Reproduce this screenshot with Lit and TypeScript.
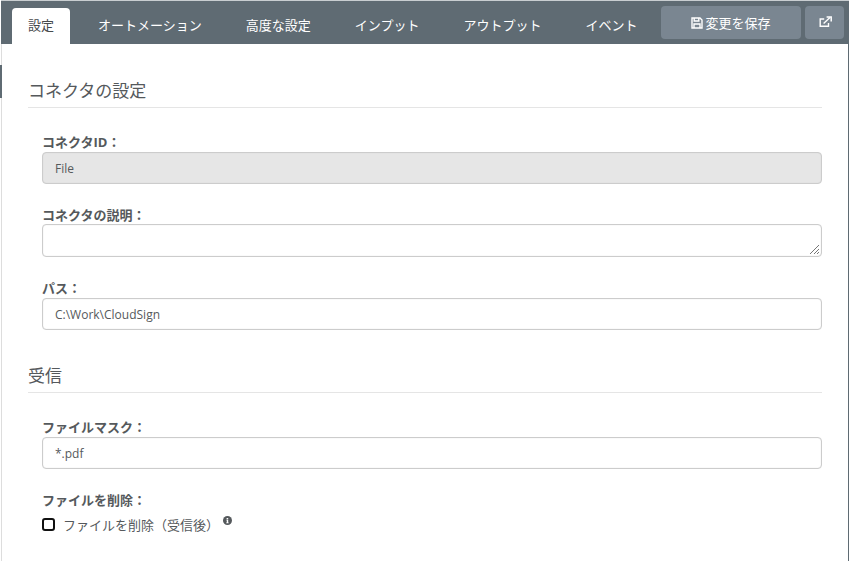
import { LitElement, html, css } from "lit";
import { customElement } from "lit/decorators.js";

@customElement("app-root")
export class AppRoot extends LitElement {
  static styles = css`
    :host { display: block; width: 849px; height: 561px; overflow: hidden; background: #fff;
      font-family: "Open Sans", "Noto Sans CJK JP", sans-serif; color: #55595c; font-size: 13px; position: relative; }
    .top { height: 1px; background: #c9ced1; margin-left: 1px; }
    .bar { height: 43px; margin-left: 1px; background: #5f6b73; display: flex; padding-left: 11px; box-sizing: border-box; }
    .tabs { display: flex; gap: 12px; padding-top: 7px; flex: 1; }
    .tab { padding: 0 16px; height: 36px; line-height: 35px; color: #fff; font-size: 13px; border-radius: 4px 4px 0 0; white-space: nowrap; }
    .tab.active { background: #fff; color: #464a4c; }
    .btn { background: #7a8691; color: #fff; border-radius: 4px; height: 33px; margin-top: 5px; display: flex; align-items: center; justify-content: center; gap: 2px; box-sizing: border-box; font-size: 13px; }
    .save { width: 140px; margin-right: 4px; }
    .ext { width: 39px; margin-right: 5px; padding-left: 1px; padding-bottom: 2px; }
    .panel { margin-left: 1px; border-left: 1px solid #ddd; border-right: 1px solid #5f6b73; height: 517px; padding: 0 26px 0 26px; box-sizing: border-box; position: relative; }
    .marker { position: absolute; left: -2px; top: 21px; width: 2px; height: 33px; background: #5f6b73; }
    h2 { margin: 0; font-weight: 400; font-size: 17px; line-height: 24px; color: #55595c; padding-bottom: 4px; border-bottom: 1px solid #e5e5e5; }
    h2.first { padding-top: 35px; }
    h2.second { margin-top: 34px; }
    .group { margin-left: 14px; }
    label.lbl { display: block; font-weight: 700; font-size: 13px; line-height: 18px; color: #55595c; }
    .input { height: 32px; border: 1px solid #ccc; border-radius: 4px; box-sizing: border-box; padding: 0 12px; line-height: 32px; font-size: 12px; color: #55595c; background: #fff; margin-top: 1px; box-shadow: inset 0 0 1px #ccc; }
    .ro { background: #e6e6e6; height: 32px; }
    .ta { height: 33px; position: relative; }
    .grip { position: absolute; right: 1px; bottom: 1px; }
    .check { display: flex; align-items: center; margin-top: 5px; font-size: 13px; color: #55595c; height: 18px; }
    .box { width: 9px; height: 9px; border: 2px solid #111; border-radius: 3px; margin: 2px 8px 0 0; background: #fff; }
    .txt { position: relative; top: 1px; }
    .info { margin-left: 4px; margin-bottom: 5px; }
  `;

  render() {
    return html`
      <div class="top"></div>
      <div class="bar">
        <div class="tabs">
          <div class="tab active">設定</div>
          <div class="tab">オートメーション</div>
          <div class="tab">高度な設定</div>
          <div class="tab">インプット</div>
          <div class="tab">アウトプット</div>
          <div class="tab">イベント</div>
        </div>
        <div class="btn save">
          <svg width="12" height="12" viewBox="0 0 12 12" fill="none" stroke="#fff" stroke-width="1.4"><path d="M1 1h8l2 2v8H1z"/><path d="M3.2 1v3h4.6V1M3 11V7h6v4"/></svg>
          <span>変更を保存</span>
        </div>
        <div class="btn ext">
          <svg width="13" height="12" viewBox="0 0 13 12" fill="none" stroke="#fff" stroke-width="1.4"><path d="M9.5 7v3.3H1.2V3h4"/><path d="M4.6 7.6 11 1.6"/><path d="M7.6 1h4.6v4.4" stroke-width="1.5"/></svg>
        </div>
      </div>
      <div class="panel">
        <div class="marker"></div>
        <h2 class="first">コネクタの設定</h2>
        <div class="group" style="padding-top:25px">
          <label class="lbl">コネクタID：</label>
          <div class="input ro">File</div>
          <label class="lbl" style="margin-top:22px">コネクタの説明：</label>
          <div class="input ta" style="margin-top:0">
            <svg class="grip" width="11" height="11" viewBox="0 0 11 11" stroke="#777" stroke-width="1"><path d="M1 10 10 1M5 10l5-5M8 10l2-2"/></svg>
          </div>
          <label class="lbl" style="margin-top:22px">パス：</label>
          <div class="input">C:\\Work\\CloudSign</div>
        </div>
        <h2 class="second">受信</h2>
        <div class="group" style="padding-top:25px">
          <label class="lbl">ファイルマスク：</label>
          <div class="input">*.pdf</div>
          <label class="lbl" style="margin-top:22px">ファイルを削除：</label>
          <div class="check">
            <span class="box"></span><span class="txt">ファイルを削除（受信後）</span>
            <svg class="info" width="9" height="9" viewBox="0 0 9 9"><circle cx="4.5" cy="4.5" r="4.5" fill="#55595c"/><path d="M3.6 2h1.6v1.2H3.6zM3.4 3.8h1.8v2.6h.5v.8H3.2v-.8h.6V4.6h-.4z" fill="#fff"/></svg>
          </div>
        </div>
      </div>
    `;
  }
}
